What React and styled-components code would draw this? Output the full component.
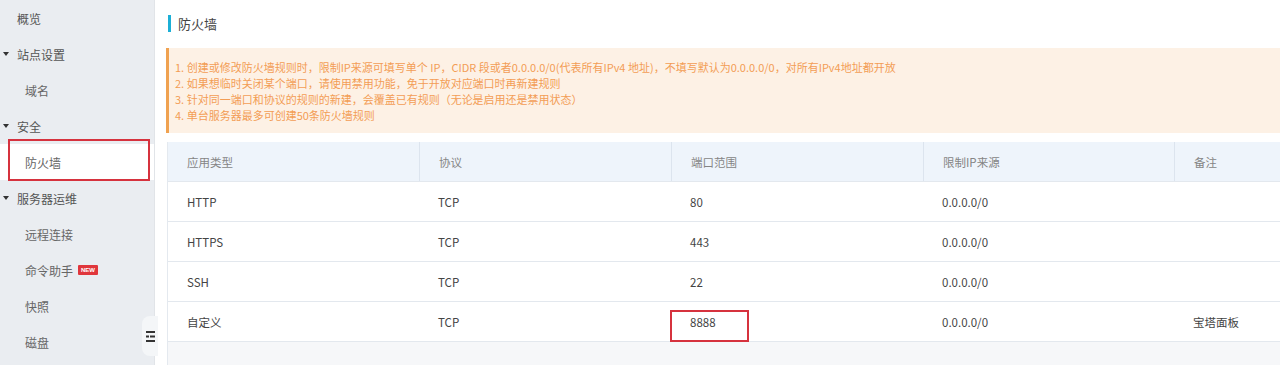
import styled, { createGlobalStyle } from 'styled-components'

const GlobalStyle = createGlobalStyle`
    html, body {
        margin: 0;
        padding: 0;
        height: 365px;
        overflow: hidden;
        background: #ffffff;
        font-family: "Noto Sans CJK SC", "Noto Sans", sans-serif;
    }
`

const Page = styled.div`
    display: flex;
    width: 1280px;
    height: 365px;
`

/* SIDEBAR */
const Sidebar = styled.nav`
    position: relative;
    width: 155px;
    flex-shrink: 0;
    background-color: #eaedf1;
    border-right: 1px solid #e1e4e8;
    box-sizing: border-box;
`

const NavItem = styled.div`
    position: relative;
    height: 36px;
    display: flex;
    align-items: center;
    padding-left: ${(p) => (p.$sub ? '25px' : '17px')};
    font-size: 12px;
    color: ${(p) => (p.$sub ? '#666' : '#555')};
    background-color: ${(p) => (p.$active ? '#ffffff' : 'transparent')};
`

const Caret = styled.span`
    position: absolute;
    left: 3px;
    top: 50%;
    margin-top: -2px;
    width: 0;
    height: 0;
    border-left: 3px solid transparent;
    border-right: 3px solid transparent;
    border-top: 4px solid #333;
`

const NewBadge = styled.span`
    margin-left: 5px;
    background-color: #e0363c;
    color: #fff;
    font-family: "Liberation Sans", sans-serif;
    font-size: 6px;
    font-weight: bold;
    line-height: 10px;
    padding: 0 3px;
    border-radius: 1px;
`

const MarkBox = styled.span`
    position: absolute;
    border: 2px solid #d6323e;
    pointer-events: none;
`

const NavMark = styled(MarkBox)`
    left: 8px;
    right: 4px;
    top: -5px;
    bottom: -1px;
`

const Collapse = styled.div`
    position: absolute;
    right: -4px;
    top: 316px;
    width: 16px;
    height: 40px;
    background-color: #f4f6f8;
    border-radius: 8px 0 0 8px;
    display: flex;
    align-items: center;
    justify-content: center;
`

/* MAIN */
const Main = styled.main`
    flex: 1;
    min-width: 0;
    padding: 14px 0 0 11px;
    display: flex;
    flex-direction: column;
`

const TitleBar = styled.div`
    display: flex;
    align-items: center;
    height: 18px;
    padding-left: 2px;
    gap: 7px;
    font-size: 13px;
    color: #444;

    &::before {
        content: '';
        width: 3px;
        height: 17px;
        background-color: #1cafd6;
    }
`

const Notice = styled.div`
    margin-top: 16px;
    height: 85px;
    box-sizing: border-box;
    padding: 11px 0 0 6px;
    background-color: #fdf1e5;
    border-left: 3px solid #f0a250;
    font-size: 11px;
    line-height: 16px;
    color: #f39d55;
`

const Table = styled.div`
    margin-top: 9px;
    margin-left: 1px;
    border-left: 1px solid #e4e9ef;
    flex: 1;
    display: flex;
    flex-direction: column;
    background-color: #f6f7f9;
`

const Row = styled.div`
    display: grid;
    grid-template-columns: 251px 252px 252px 251px 1fr;
    height: 40px;
    box-sizing: border-box;
    border-bottom: 1px solid #e3e8ee;
    background-color: ${(p) => (p.$head ? '#eef4fb' : '#ffffff')};
    font-size: 11.5px;
    color: ${(p) => (p.$head ? '#858585' : '#444')};
`

const Cell = styled.div`
    position: relative;
    display: flex;
    align-items: center;
    padding-left: 19px;
    border-left: ${(p) => (p.$divider ? '1px solid #dce4ee' : 'none')};
    box-sizing: border-box;
`

const CellMark = styled(MarkBox)`
    left: -1px;
    top: 8px;
    width: 75px;
    bottom: -1px;
`

const nav = [
    { label: '概览' },
    { label: '站点设置', caret: true },
    { label: '域名', sub: true },
    { label: '安全', caret: true },
    { label: '防火墙', sub: true, active: true },
    { label: '服务器运维', caret: true },
    { label: '远程连接', sub: true },
    { label: '命令助手', sub: true, badge: true },
    { label: '快照', sub: true },
    { label: '磁盘', sub: true },
]

const notes = [
    '1. 创建或修改防火墙规则时，限制IP来源可填写单个 IP，CIDR 段或者0.0.0.0/0(代表所有IPv4 地址)，不填写默认为0.0.0.0/0，对所有IPv4地址都开放',
    '2. 如果想临时关闭某个端口，请使用禁用功能，免于开放对应端口时再新建规则',
    '3. 针对同一端口和协议的规则的新建，会覆盖已有规则（无论是启用还是禁用状态）',
    '4. 单台服务器最多可创建50条防火墙规则',
]

const headers = ['应用类型', '协议', '端口范围', '限制IP来源', '备注']

const rules = [
    ['HTTP', 'TCP', '80', '0.0.0.0/0', ''],
    ['HTTPS', 'TCP', '443', '0.0.0.0/0', ''],
    ['SSH', 'TCP', '22', '0.0.0.0/0', ''],
    ['自定义', 'TCP', '8888', '0.0.0.0/0', '宝塔面板'],
]

const MenuIcon = () => (
    <svg width="9" height="11" viewBox="0 0 9 11">
        <rect x="0" y="0" width="9" height="2" fill="#333" />
        <rect x="0" y="4.5" width="3" height="2" fill="#333" />
        <rect x="4" y="4.5" width="5" height="2" fill="#333" />
        <rect x="0" y="9" width="9" height="2" fill="#333" />
    </svg>
)

const App = () => {
    return (
        <Page>
            <GlobalStyle />
            <Sidebar>
                {nav.map((item) => (
                    <NavItem key={item.label} $sub={item.sub} $active={item.active}>
                        {item.caret && <Caret />}
                        {item.label}
                        {item.badge && <NewBadge>NEW</NewBadge>}
                        {item.active && <NavMark />}
                    </NavItem>
                ))}
                <Collapse>
                    <MenuIcon />
                </Collapse>
            </Sidebar>
            <Main>
                <TitleBar>防火墙</TitleBar>
                <Notice>
                    {notes.map((n) => (
                        <div key={n}>{n}</div>
                    ))}
                </Notice>
                <Table>
                    <Row $head>
                        {headers.map((h, i) => (
                            <Cell key={h} $divider={i > 0}>
                                {h}
                            </Cell>
                        ))}
                    </Row>
                    {rules.map((r) => (
                        <Row key={r[0]}>
                            {r.map((v, i) => (
                                <Cell key={i}>
                                    {v}
                                    {v === '8888' && <CellMark />}
                                </Cell>
                            ))}
                        </Row>
                    ))}
                </Table>
            </Main>
        </Page>
    )
}

export default App
